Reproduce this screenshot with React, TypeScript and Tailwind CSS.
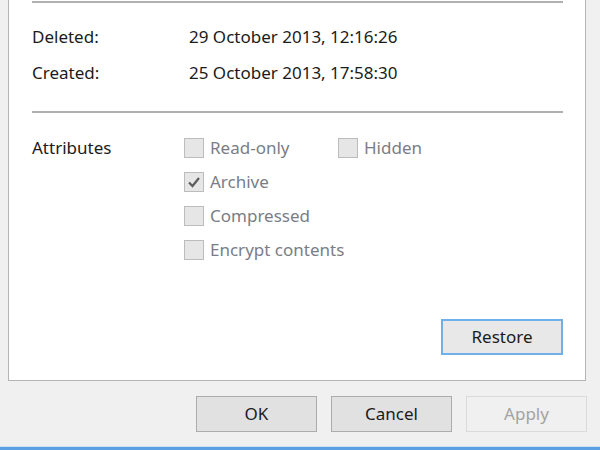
import React from "react";

function Check({ checked, label }: { checked?: boolean; label: string }) {
  return (
    <div className="flex items-center h-[34px]">
      <div className="w-[20px] h-[20px] border border-[#bcbcbc] bg-[#e6e6e6] flex items-center justify-center">
        {checked && (
          <svg width="14" height="12" viewBox="0 0 14 12">
            <path d="M2 6.5 L5.5 10 L12 2" fill="none" stroke="#5c5c5c" strokeWidth="2.2" />
          </svg>
        )}
      </div>
      <span className="ml-[6px] text-[#7a7d85]">{label}</span>
    </div>
  );
}

export default function App() {
  return (
    <div
      className="w-[600px] h-[450px] bg-[#f0f0f0] flex flex-col overflow-hidden relative text-[17px] text-[#1b1b1b]"
      style={{ fontFamily: '"Noto Sans", "Open Sans", sans-serif' }}
    >
      <div className="ml-[8px] w-[578px] h-[381px] bg-white border-x border-b border-[#b4b4b4] pl-[23px] pr-[22px] flex flex-col">
        <div className="mt-[1px] h-[2px] bg-[#b0b0b0]" />
        <div className="mt-[16px] flex items-center h-[36px]">
          <span className="w-[157px]">Deleted:</span>
          <span>29 October 2013, 12:16:26</span>
        </div>
        <div className="flex items-center h-[36px]">
          <span className="w-[157px]">Created:</span>
          <span>25 October 2013, 17:58:30</span>
        </div>
        <div className="mt-[20px] h-[2px] bg-[#b0b0b0]" />
        <div className="mt-[18px] flex">
          <span className="w-[152px] h-[34px] flex items-center">Attributes</span>
          <div className="flex flex-col">
            <div className="flex">
              <div className="w-[154px]">
                <Check label="Read-only" />
              </div>
              <Check label="Hidden" />
            </div>
            <Check checked label="Archive" />
            <Check label="Compressed" />
            <Check label="Encrypt contents" />
          </div>
        </div>
        <div className="mt-auto mb-[25px] flex justify-end">
          <button className="w-[122px] h-[36px] border-2 border-[#6fb0ea] bg-[#e8e8e8] text-[#1b1b1b]">
            Restore
          </button>
        </div>
      </div>
      <div className="mt-[15px] flex justify-end gap-[14px] pr-[13px]">
        <button className="w-[121px] h-[36px] border border-[#acacac] bg-[#e1e1e1]">OK</button>
        <button className="w-[121px] h-[36px] border border-[#acacac] bg-[#e1e1e1]">Cancel</button>
        <button className="w-[121px] h-[36px] border border-[#dadada] bg-[#f0f0f0] text-[#a3a3a3]">Apply</button>
      </div>
      <div className="absolute left-0 right-0 bottom-0 h-[4px] bg-[#5aa0e3] border-t border-[#cfe2f5]" />
    </div>
  );
}
